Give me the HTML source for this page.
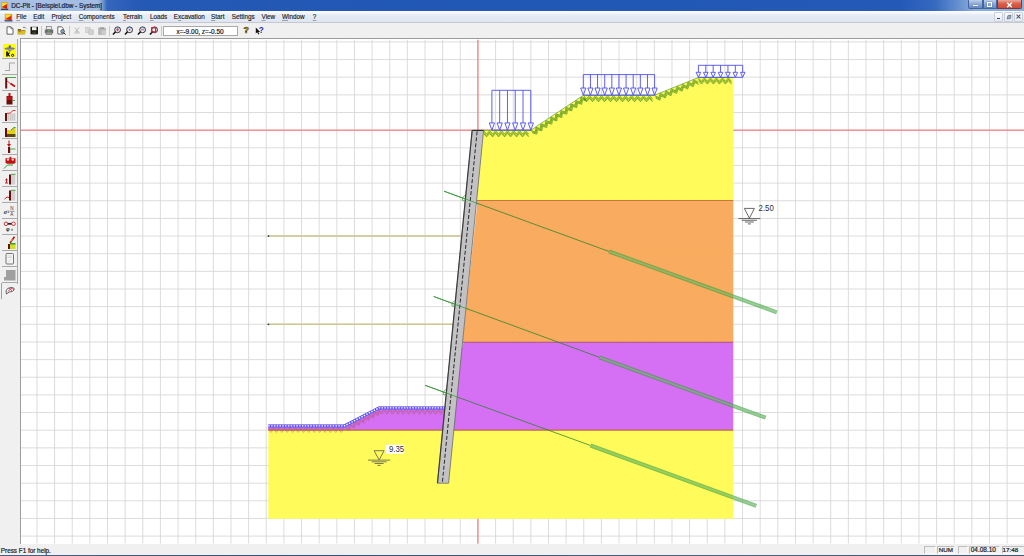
<!DOCTYPE html>
<html><head><meta charset="utf-8"><style>
*{margin:0;padding:0;box-sizing:border-box}
html,body{width:1024px;height:556px;overflow:hidden;background:#f0f0f0;font-family:"Liberation Sans",sans-serif}
.abs{position:absolute}
.t{position:absolute;white-space:nowrap;line-height:1;font-family:"Liberation Sans",sans-serif}
u{text-decoration:underline;text-underline-offset:0.8px;text-decoration-thickness:0.4px;text-decoration-color:#9aa0aa}
#title{left:0;top:0;width:1024px;height:11.3px;background:linear-gradient(90deg,#a9c1e4 0,#a2bce2 98px,#7d9fd6 102px,#3566bd 107px,#2459b6 140px,#2157b5 600px,#2459b8 900px,#3669c0 935px,#6f96d2 962px,#8aaedc 975px)}
#menu{left:0;top:11.3px;width:1024px;height:10.9px;background:linear-gradient(#fbfcfe 0,#f4f7fb 20%,#e6ecf5 35%,#dfe6f1 100%)}
#tool{left:0;top:22.8px;width:1024px;height:16px;background:#f0f0f0}
svg{position:absolute;left:0;top:0}
</style></head><body>
<div class="abs" id="title"></div>
<svg class="abs" style="left:0;top:1px" width="10" height="10" viewBox="0 0 10 10"><rect x="1" y="1.2" width="7.2" height="7.6" fill="#e8a020"/><rect x="2" y="2" width="5" height="3" fill="#f0e020"/><path d="M2 6 L7 3 L7 8 Z" fill="#d02010"/><rect x="1" y="7.8" width="7.2" height="1.2" fill="#1f3f8f"/></svg>
<div class="t" style="left:11.2px;top:3.21px;font-size:6.4px;color:#1c2030;-webkit-text-stroke:0.2px #1c2030;">DC-Pit - [Beispiel.dbw - System]</div>
<div class="abs" style="left:967.5px;top:0;width:15px;height:9.4px;background:linear-gradient(#bccfea,#94b0dc 40%,#6489c6);border:0.6px solid #44649a;border-top:none;border-radius:0 0 0 2px"></div>
<div class="abs" style="left:972.8px;top:5px;width:5.3px;height:1.4px;background:#fff;box-shadow:0 0 1px #345"></div>
<div class="abs" style="left:982.7px;top:0;width:14px;height:9.4px;background:linear-gradient(#bccfea,#94b0dc 40%,#6489c6);border:0.6px solid #44649a;border-top:none"></div>
<div class="abs" style="left:986.8px;top:2.2px;width:5px;height:4.6px;border:1.2px solid #fff;box-shadow:0 0 1px #345"></div>
<div class="abs" style="left:996.9px;top:0;width:25.6px;height:9.4px;background:linear-gradient(#eaa89a,#d8604c 45%,#cc4a36);border:0.6px solid #7a3a3a;border-top:none;border-radius:0 0 2px 0"></div>
<svg class="abs" style="left:1006px;top:1.6px" width="7" height="6" viewBox="0 0 7 6"><path d="M1.2 0.8L5.8 5.2M5.8 0.8L1.2 5.2" stroke="#fff" stroke-width="1.5"/></svg>
<div class="abs" id="menu"></div>
<svg class="abs" style="left:3.5px;top:12.5px" width="9" height="9" viewBox="0 0 9 9"><rect x="0.8" y="0.8" width="7.4" height="7.4" fill="#e89a20"/><rect x="1.6" y="1.6" width="5" height="3" fill="#f2e030"/><path d="M1.6 6 L7.4 2.5 L7.4 7.4Z" fill="#d8261a"/><rect x="0.6" y="7.2" width="7.8" height="1.2" fill="#2a4a9a"/></svg>
<div class="t" style="left:16.2px;top:14.35px;font-size:6.35px;color:#1e1e1e;-webkit-text-stroke:0.15px #1e1e1e;"><u>F</u>ile</div>
<div class="t" style="left:33.3px;top:14.35px;font-size:6.35px;color:#1e1e1e;-webkit-text-stroke:0.15px #1e1e1e;"><u>E</u>dit</div>
<div class="t" style="left:51.5px;top:14.35px;font-size:6.35px;color:#1e1e1e;-webkit-text-stroke:0.15px #1e1e1e;"><u>P</u>roject</div>
<div class="t" style="left:78.7px;top:14.35px;font-size:6.35px;color:#1e1e1e;-webkit-text-stroke:0.15px #1e1e1e;"><u>C</u>omponents</div>
<div class="t" style="left:123.0px;top:14.35px;font-size:6.35px;color:#1e1e1e;-webkit-text-stroke:0.15px #1e1e1e;"><u>T</u>errain</div>
<div class="t" style="left:150.0px;top:14.35px;font-size:6.35px;color:#1e1e1e;-webkit-text-stroke:0.15px #1e1e1e;"><u>L</u>oads</div>
<div class="t" style="left:173.8px;top:14.35px;font-size:6.35px;color:#1e1e1e;-webkit-text-stroke:0.15px #1e1e1e;">E<u>x</u>cavation</div>
<div class="t" style="left:211.0px;top:14.35px;font-size:6.35px;color:#1e1e1e;-webkit-text-stroke:0.15px #1e1e1e;"><u>S</u>tart</div>
<div class="t" style="left:231.8px;top:14.35px;font-size:6.35px;color:#1e1e1e;-webkit-text-stroke:0.15px #1e1e1e;">Settin<u>g</u>s</div>
<div class="t" style="left:261.5px;top:14.35px;font-size:6.35px;color:#1e1e1e;-webkit-text-stroke:0.15px #1e1e1e;"><u>V</u>iew</div>
<div class="t" style="left:282.0px;top:14.35px;font-size:6.35px;color:#1e1e1e;-webkit-text-stroke:0.15px #1e1e1e;"><u>W</u>indow</div>
<div class="t" style="left:312.8px;top:14.35px;font-size:6.35px;color:#1e1e1e;-webkit-text-stroke:0.15px #1e1e1e;"><u>?</u></div>
<div class="abs" style="left:993.75px;top:12.2px;width:9.4px;height:9.7px;background:linear-gradient(#fbfcfe,#e4e9f2);border:0.6px solid #c9d0dc;border-radius:1px"></div>
<div class="abs" style="left:1003.75px;top:12.2px;width:9.4px;height:9.7px;background:linear-gradient(#fbfcfe,#e4e9f2);border:0.6px solid #c9d0dc;border-radius:1px"></div>
<div class="abs" style="left:1013.75px;top:12.2px;width:9.4px;height:9.7px;background:linear-gradient(#fbfcfe,#e4e9f2);border:0.6px solid #c9d0dc;border-radius:1px"></div>
<div class="abs" style="left:996.5px;top:18px;width:3.6px;height:1.1px;background:#445"></div>
<svg class="abs" style="left:1005.5px;top:14px" width="6" height="6" viewBox="0 0 6 6"><path d="M1 5 L2 1.5 L5 1 L4.5 4.5Z" fill="#9ab" stroke="#667" stroke-width="0.7"/></svg>
<svg class="abs" style="left:1016px;top:14.3px" width="5" height="5" viewBox="0 0 5 5"><path d="M0.6 0.6L4.4 4.4M4.4 0.6L0.6 4.4" stroke="#556" stroke-width="1.1"/></svg>
<div class="abs" style="left:0;top:22px;width:1024px;height:0.9px;background:#c4c8d0"></div>
<div class="abs" id="tool"></div>
<svg class="abs" style="left:5.5px;top:26px" width="8" height="9" viewBox="0 0 8 9"><path d="M1 0.8H5L7 2.8V8.2H1Z" fill="#fff" stroke="#555" stroke-width="0.9"/><path d="M5 0.8V2.8H7" fill="none" stroke="#555" stroke-width="0.7"/></svg>
<svg class="abs" style="left:17px;top:26px" width="10" height="9" viewBox="0 0 10 9"><path d="M0.8 3H3.5L4.3 4H8V8.3H0.8Z" fill="#6b5a10"/><path d="M1.5 4.5H9.3L8 8.3H0.8Z" fill="#d8c020"/><path d="M2 5L4 6" stroke="#e03010" stroke-width="0.8"/><path d="M6 1.5Q8 0.5 9 2.5" stroke="#444" stroke-width="0.7" fill="none"/></svg>
<svg class="abs" style="left:29.5px;top:26px" width="8.5" height="9" viewBox="0 0 8.5 9"><rect x="0.5" y="0.8" width="7.5" height="7.5" fill="#1a1a0a"/><rect x="2" y="1.2" width="4.5" height="3" fill="#f4f4f4"/><rect x="2.2" y="5.6" width="4" height="2.7" fill="#3a3a2a"/></svg>
<div class="abs" style="left:41px;top:26px;width:0.8px;height:9.5px;background:#c8c8c8"></div>
<svg class="abs" style="left:44px;top:26px" width="10" height="9" viewBox="0 0 10 9"><rect x="2.5" y="0.6" width="5" height="3" fill="#e8e8e8" stroke="#666" stroke-width="0.6"/><path d="M0.8 3.5H9.2V7.2H0.8Z" fill="#707070"/><rect x="2" y="6" width="6" height="2.5" fill="#9a9a9a" stroke="#555" stroke-width="0.5"/><circle cx="5" cy="5" r="0.8" fill="#5c5"/></svg>
<svg class="abs" style="left:56.8px;top:26.2px" width="9.5" height="9" viewBox="0 0 9.5 9"><path d="M0.8 0.8H4.6L6.2 2.4V8H0.8Z" fill="#fff" stroke="#444" stroke-width="0.8"/><circle cx="5.6" cy="5.4" r="1.8" fill="#8ac" stroke="#333" stroke-width="0.7"/><path d="M6.8 6.8L8.6 8.6" stroke="#222" stroke-width="1"/></svg>
<div class="abs" style="left:68.6px;top:26px;width:0.8px;height:9.5px;background:#c8c8c8"></div>
<svg class="abs" style="left:73.8px;top:27px" width="6" height="7" viewBox="0 0 6 7"><path d="M1 0.5L4 5M5 0.5L2 5" stroke="#b8b8b8" stroke-width="0.9"/><circle cx="1.6" cy="5.6" r="0.9" fill="none" stroke="#b0b0b0" stroke-width="0.7"/><circle cx="4.4" cy="5.6" r="0.9" fill="none" stroke="#b0b0b0" stroke-width="0.7"/></svg>
<svg class="abs" style="left:84.8px;top:26.8px" width="9.5" height="8" viewBox="0 0 9.5 8"><rect x="0.6" y="0.6" width="4.5" height="5" fill="#d8d8d8" stroke="#bbb" stroke-width="0.5"/><rect x="3.8" y="2.8" width="4.8" height="4.8" fill="#d0d0d0" stroke="#bbb" stroke-width="0.5"/></svg>
<svg class="abs" style="left:97.5px;top:26.8px" width="8.5" height="8" viewBox="0 0 8.5 8"><rect x="0.6" y="1" width="7" height="6.6" fill="#b8b8b8" stroke="#a8a8a8" stroke-width="0.5"/><rect x="2" y="0.4" width="4" height="1.5" fill="#999"/><rect x="3.5" y="3.5" width="4.5" height="4" fill="#ccc"/></svg>
<div class="abs" style="left:108.7px;top:26px;width:0.8px;height:9.5px;background:#c8c8c8"></div>
<svg class="abs" style="left:112.2px;top:26.2px" width="9" height="9" viewBox="0 0 9 9"><circle cx="5.6" cy="3.8" r="2.9" fill="#eef4fb" stroke="#1a1a2a" stroke-width="0.9"/><path d="M3.6 5.8L0.9 8.5" stroke="#111" stroke-width="1.5"/><path d="M4 2Q5.6 1.2 7.2 2.2" stroke="#3a80d0" stroke-width="0.7" fill="none"/><path d="M5.6 2.2V5.4M4 3.8H7.2" stroke="#e03030" stroke-width="0.9"/></svg>
<svg class="abs" style="left:124.4px;top:26.2px" width="9" height="9" viewBox="0 0 9 9"><circle cx="5.6" cy="3.8" r="2.9" fill="#eef4fb" stroke="#1a1a2a" stroke-width="0.9"/><path d="M3.6 5.8L0.9 8.5" stroke="#111" stroke-width="1.5"/><path d="M4 2Q5.6 1.2 7.2 2.2" stroke="#3a80d0" stroke-width="0.7" fill="none"/><circle cx="5.6" cy="3.8" r="0.9" fill="#e03030"/></svg>
<svg class="abs" style="left:136.6px;top:26.2px" width="9" height="9" viewBox="0 0 9 9"><circle cx="5.6" cy="3.8" r="2.9" fill="#eef4fb" stroke="#1a1a2a" stroke-width="0.9"/><path d="M3.6 5.8L0.9 8.5" stroke="#111" stroke-width="1.5"/><path d="M4 2Q5.6 1.2 7.2 2.2" stroke="#3a80d0" stroke-width="0.7" fill="none"/><path d="M4 3.8H7.2" stroke="#e03030" stroke-width="0.9"/></svg>
<svg class="abs" style="left:148.8px;top:26.2px" width="9" height="9" viewBox="0 0 9 9"><circle cx="5.6" cy="3.8" r="2.9" fill="#eef4fb" stroke="#1a1a2a" stroke-width="0.9"/><path d="M3.6 5.8L0.9 8.5" stroke="#111" stroke-width="1.5"/><path d="M4 2Q5.6 1.2 7.2 2.2" stroke="#3a80d0" stroke-width="0.7" fill="none"/><rect x="2.6" y="1.8" width="4" height="4" fill="none" stroke="#e02020" stroke-width="1.2"/></svg>
<div class="abs" style="left:161.4px;top:26px;width:0.8px;height:9.5px;background:#c8c8c8"></div>
<div class="abs" style="left:163.2px;top:26.2px;width:74.7px;height:10.1px;background:#fff;border:0.8px solid #a9a9a9"></div>
<div class="t" style="left:176.4px;top:28.92px;font-size:6.5px;color:#1a1a1a;-webkit-text-stroke:0.2px #1a1a1a;">x=-9.00, z=-0.50</div>
<div class="t" style="left:243.6px;top:26.06px;font-size:9px;color:#e0c000;-webkit-text-stroke:0.5px #403000;"><b>?</b></div>
<svg class="abs" style="left:254.8px;top:26.6px" width="9.5" height="8" viewBox="0 0 9.5 8"><path d="M0.8 0.6V6.6L2.2 5.3L3.4 7.6L4.4 7.1L3.3 4.9H5.1Z" fill="#111"/></svg>
<div class="t" style="left:258.8px;top:26.58px;font-size:8.2px;color:#2030b0;"><b>?</b></div>
<div class="abs" style="left:19.7px;top:38.3px;width:1004.3px;height:505.49999999999994px;background:#fff;border-left:1.3px solid #9c9c9c;border-top:1.3px solid #9c9c9c"></div>
<div class="abs" style="left:16.6px;top:38.5px;width:1.3px;height:245px;background:#a8a8a8"></div>
<div class="abs" style="left:1.2px;top:283px;width:1.2px;height:16px;background:#a0a0a0"></div>
<div class="abs" style="left:1.8px;top:58.0px;width:15.5px;height:1.1px;background:#a9a9a9"></div>
<div class="abs" style="left:1.8px;top:74.0px;width:15.5px;height:1.1px;background:#a9a9a9"></div>
<div class="abs" style="left:1.8px;top:90.0px;width:15.5px;height:1.1px;background:#a9a9a9"></div>
<div class="abs" style="left:1.8px;top:106.0px;width:15.5px;height:1.1px;background:#a9a9a9"></div>
<div class="abs" style="left:1.8px;top:122.0px;width:15.5px;height:1.1px;background:#a9a9a9"></div>
<div class="abs" style="left:1.8px;top:138.0px;width:15.5px;height:1.1px;background:#a9a9a9"></div>
<div class="abs" style="left:1.8px;top:154.0px;width:15.5px;height:1.1px;background:#a9a9a9"></div>
<div class="abs" style="left:1.8px;top:170.0px;width:15.5px;height:1.1px;background:#a9a9a9"></div>
<div class="abs" style="left:1.8px;top:186.0px;width:15.5px;height:1.1px;background:#a9a9a9"></div>
<div class="abs" style="left:1.8px;top:202.0px;width:15.5px;height:1.1px;background:#a9a9a9"></div>
<div class="abs" style="left:1.8px;top:218.0px;width:15.5px;height:1.1px;background:#a9a9a9"></div>
<div class="abs" style="left:1.8px;top:234.0px;width:15.5px;height:1.1px;background:#a9a9a9"></div>
<div class="abs" style="left:1.8px;top:250.0px;width:15.5px;height:1.1px;background:#a9a9a9"></div>
<div class="abs" style="left:1.8px;top:266.0px;width:15.5px;height:1.1px;background:#a9a9a9"></div>
<div class="abs" style="left:1.8px;top:282.0px;width:15.5px;height:1.1px;background:#a9a9a9"></div>
<svg class="abs" style="left:2.8px;top:43.6px" width="13.5" height="14" viewBox="0 0 13.5 14"><rect x="0" y="0" width="13.5" height="13.2" fill="#ffff00"/><path d="M1.2 4.2Q6.7 2.4 12.3 4.2L10.5 5.8Q6.7 5.2 2.9 5.8Z" fill="#7c7c98"/><path d="M4.2 5.4L9.2 5.4L6.7 8.2Z" fill="#8a8aa8"/><rect x="5.8" y="1.6" width="1.9" height="2" fill="#2030e0"/><path d="M4 7.6V12.4" stroke="#000" stroke-width="1.6"/><path d="M4.6 10.2L6.6 8.6M4.8 10L6.6 12.4" stroke="#000" stroke-width="1.2"/><circle cx="9.6" cy="11.3" r="1.1" fill="none" stroke="#301010" stroke-width="1"/></svg>
<svg class="abs" style="left:2.8px;top:59.6px" width="13.5" height="14" viewBox="0 0 13.5 14"><path d="M2 10.5H6.5V3H12" stroke="#a8a8a8" stroke-width="1.1" fill="none"/></svg>
<svg class="abs" style="left:2.8px;top:75.6px" width="13.5" height="14" viewBox="0 0 13.5 14"><rect x="2.2" y="1.5" width="2" height="11" fill="#6a0c0c"/><path d="M3 1.5H13" stroke="#30a030" stroke-width="0.9"/><path d="M4 5L8 8" stroke="#c01010" stroke-width="0.7"/><path d="M7.5 7.5L12 10.5" stroke="#c01010" stroke-width="1.8"/></svg>
<svg class="abs" style="left:2.8px;top:91.6px" width="13.5" height="14" viewBox="0 0 13.5 14"><rect x="5.5" y="1" width="2" height="3" fill="#c01010"/><path d="M3.5 4H9.5V12.5H3.5Z" fill="#6a0c0c"/><path d="M4 4.5H9V8H4Z" fill="#c01010"/><path d="M9.5 8.5H12" stroke="#30a030" stroke-width="0.9"/></svg>
<svg class="abs" style="left:2.8px;top:107.6px" width="13.5" height="14" viewBox="0 0 13.5 14"><rect x="2" y="5" width="2" height="8" fill="#6a0c0c"/><rect x="4" y="5" width="8.5" height="8" fill="#d8d8d8"/><path d="M5 7H12M5 9H12M5 11H12" stroke="#aaa" stroke-width="0.6" stroke-dasharray="1 1"/><path d="M4 5.2H7L10 2.5H12.5" stroke="#e02020" stroke-width="0.9" fill="none"/></svg>
<svg class="abs" style="left:2.8px;top:123.6px" width="13.5" height="14" viewBox="0 0 13.5 14"><rect x="2" y="4" width="2" height="9" fill="#6a0c0c"/><path d="M4 6H8L11 3.5H12.5V10H4Z" fill="#e0d020"/><path d="M8 6L11 3.5H12.5" stroke="#30a030" stroke-width="1" fill="none"/><rect x="4" y="10" width="8.5" height="3" fill="#5a4a10"/></svg>
<svg class="abs" style="left:2.8px;top:139.6px" width="13.5" height="14" viewBox="0 0 13.5 14"><path d="M6 0.5V5" stroke="#c01010" stroke-width="1"/><path d="M4 4H8L6 7Z" fill="#c01010"/><rect x="5" y="7" width="2.2" height="6" fill="#6a0c0c"/><path d="M7.2 9H12.5" stroke="#30a030" stroke-width="0.9"/></svg>
<svg class="abs" style="left:2.8px;top:155.6px" width="13.5" height="14" viewBox="0 0 13.5 14"><path d="M2.5 2.2H12.5V6.8L11 7.8H4L2.5 6.8Z" fill="#c01010"/><circle cx="5" cy="3.6" r="1.2" fill="#ffd0d0"/><circle cx="9.8" cy="3.6" r="1.2" fill="#ffd0d0"/><rect x="6.5" y="0.8" width="1.8" height="1.6" fill="#c01010"/><path d="M1 12.5L4.5 9H10" stroke="#30a030" stroke-width="1" fill="none"/></svg>
<svg class="abs" style="left:2.8px;top:171.6px" width="13.5" height="14" viewBox="0 0 13.5 14"><path d="M2 11H5M3.5 7V11" stroke="#c01010" stroke-width="0.9"/><path d="M2.5 8.5L3.5 6.5L4.5 8.5" stroke="#c01010" stroke-width="0.7" fill="none"/><rect x="6" y="2.5" width="2.2" height="10" fill="#6a0c0c"/><rect x="8.2" y="2.5" width="4" height="10" fill="#d0d0d0"/><path d="M8.2 2.3H12.5" stroke="#30a030" stroke-width="0.9"/></svg>
<svg class="abs" style="left:2.8px;top:187.6px" width="13.5" height="14" viewBox="0 0 13.5 14"><path d="M1.5 11L4 9L6 9.5" stroke="#c01010" stroke-width="0.9" fill="none"/><rect x="6" y="2.5" width="2.2" height="10" fill="#6a0c0c"/><rect x="8.2" y="2.5" width="4" height="10" fill="#d0d0d0"/><path d="M8.2 2.3H12.5" stroke="#30a030" stroke-width="0.9"/></svg>
<svg class="abs" style="left:2.8px;top:203.6px" width="13.5" height="14" viewBox="0 0 13.5 14"><text x="0.8" y="9.6" font-family="Liberation Serif" font-style="italic" font-weight="bold" font-size="6" fill="#222">σ</text><path d="M4.6 7.2H6.4M4.6 8.4H6.4" stroke="#333" stroke-width="0.6"/><text x="7.3" y="6.2" font-family="Liberation Sans" font-size="4.5" fill="#333">N</text><path d="M7 7.3H11.5" stroke="#333" stroke-width="0.5"/><text x="7.3" y="11.8" font-family="Liberation Sans" font-size="4.5" fill="#333">A</text></svg>
<svg class="abs" style="left:2.8px;top:219.6px" width="13.5" height="14" viewBox="0 0 13.5 14"><path d="M3.5 3.8H10" stroke="#222" stroke-width="1.8"/><circle cx="3" cy="3.8" r="1.8" fill="#fff" stroke="#d02020" stroke-width="0.9"/><circle cx="10.5" cy="3.8" r="1.8" fill="#fff" stroke="#d02020" stroke-width="0.9"/><text x="3" y="11" font-family="Liberation Sans" font-weight="bold" font-size="5" fill="#222">φ</text><path d="M8 9.3H10M8 10.2H10" stroke="#333" stroke-width="0.5"/></svg>
<svg class="abs" style="left:2.8px;top:235.6px" width="13.5" height="14" viewBox="0 0 13.5 14"><path d="M11.5 0.8L7 7" stroke="#c01010" stroke-width="1.6"/><path d="M9.5 3.5L8 5.5" stroke="#f0e020" stroke-width="0.9"/><rect x="5" y="8" width="2" height="5" fill="#6a0c0c"/><rect x="7" y="8" width="5.5" height="5" fill="#d0e020"/><rect x="7" y="7" width="5.5" height="1.5" fill="#30a030"/></svg>
<svg class="abs" style="left:2.8px;top:251.6px" width="13.5" height="14" viewBox="0 0 13.5 14"><rect x="3" y="1.5" width="7.5" height="10.5" rx="1" fill="#f4f4f4" stroke="#555" stroke-width="0.8"/><path d="M4.5 4H9M4.5 5.5H9" stroke="#bbb" stroke-width="0.5"/><path d="M5 10L8.5 7" stroke="#ccc" stroke-width="0.6"/></svg>
<svg class="abs" style="left:2.8px;top:267.6px" width="13.5" height="14" viewBox="0 0 13.5 14"><path d="M3 2H12.5V12.5H1V9H3Z" fill="#a0a0a0"/></svg>
<svg class="abs" style="left:2.8px;top:283.6px" width="13.5" height="14" viewBox="0 0 13.5 14"><path d="M3 7Q4 3.5 8 3.5Q12 3.5 11 6Q10 8 6 8L3.5 10Z" fill="#fff" stroke="#222" stroke-width="0.7"/><path d="M5 7.5Q8 3 11 5.5" stroke="#e03040" stroke-width="1" fill="none"/><path d="M6 4L9 7" stroke="#e03040" stroke-width="0.8"/></svg>
<svg width="1024" height="556" viewBox="0 0 1024 556">
<defs><clipPath id="cv"><rect x="21.0" y="39.6" width="1003.0" height="504.19999999999993"/></clipPath></defs>
<g clip-path="url(#cv)">
<path d="M36.94 39.6V543.8M54.58 39.6V543.8M72.22 39.6V543.8M89.86 39.6V543.8M107.50 39.6V543.8M125.14 39.6V543.8M142.78 39.6V543.8M160.42 39.6V543.8M178.06 39.6V543.8M195.70 39.6V543.8M213.34 39.6V543.8M230.98 39.6V543.8M248.62 39.6V543.8M266.26 39.6V543.8M283.90 39.6V543.8M301.54 39.6V543.8M319.18 39.6V543.8M336.82 39.6V543.8M354.46 39.6V543.8M372.10 39.6V543.8M389.74 39.6V543.8M407.38 39.6V543.8M425.02 39.6V543.8M442.66 39.6V543.8M460.30 39.6V543.8M477.94 39.6V543.8M495.58 39.6V543.8M513.22 39.6V543.8M530.86 39.6V543.8M548.50 39.6V543.8M566.14 39.6V543.8M583.78 39.6V543.8M601.42 39.6V543.8M619.06 39.6V543.8M636.70 39.6V543.8M654.34 39.6V543.8M671.98 39.6V543.8M689.62 39.6V543.8M707.26 39.6V543.8M724.90 39.6V543.8M742.54 39.6V543.8M760.18 39.6V543.8M777.82 39.6V543.8M795.46 39.6V543.8M813.10 39.6V543.8M830.74 39.6V543.8M848.38 39.6V543.8M866.02 39.6V543.8M883.66 39.6V543.8M901.30 39.6V543.8M918.94 39.6V543.8M936.58 39.6V543.8M954.22 39.6V543.8M971.86 39.6V543.8M989.50 39.6V543.8M1007.14 39.6V543.8M21.0 41.90H1024M21.0 59.55H1024M21.0 77.20H1024M21.0 94.85H1024M21.0 112.50H1024M21.0 130.15H1024M21.0 147.80H1024M21.0 165.45H1024M21.0 183.10H1024M21.0 200.75H1024M21.0 218.40H1024M21.0 236.05H1024M21.0 253.70H1024M21.0 271.35H1024M21.0 289.00H1024M21.0 306.65H1024M21.0 324.30H1024M21.0 341.95H1024M21.0 359.60H1024M21.0 377.25H1024M21.0 394.90H1024M21.0 412.55H1024M21.0 430.20H1024M21.0 447.85H1024M21.0 465.50H1024M21.0 483.15H1024M21.0 500.80H1024M21.0 518.45H1024M21.0 536.10H1024" stroke="#d6d6d6" stroke-width="0.85" fill="none"/>
<path d="M477.94 39.6V543.8M21.0 130.15H1024" stroke="#ef6262" stroke-width="0.95" fill="none"/>
<polygon points="483.6,130.3 530.7,130.3 583.5,95.2 654.6,95.2 698.4,77.5 733.3,77.5 733.3,200.5 476.65,200.5" fill="#fffb5a"/>
<polygon points="477.65,200.5 733.3,200.5 733.3,342.3 462.58,342.3" fill="#f9ab5f"/>
<polygon points="463.58,342.3 733.3,342.3 733.3,430.1 268.3,430.1 268.3,424.6 344.4,424.6 378.9,406.6 446.13,406.6" fill="#d56ff4"/>
<polygon points="268.3,430.1 733.3,430.1 733.3,518.8 268.3,518.8" fill="#fffb5a"/>
<path d="M476.65 200.5H733.3" stroke="#c8783a" stroke-width="1.1"/>
<path d="M462.58 342.3H733.3" stroke="#a8507a" stroke-width="1.1"/>
<path d="M268.3 430.1H733.3" stroke="#b86a48" stroke-width="1.1"/>
<path d="M483.60,130.70 L486.60,134.10 L489.60,130.70 L492.60,134.10 L495.60,130.70 L498.60,134.10 L501.60,130.70 L504.60,134.10 L507.60,130.70 L510.60,134.10 L513.60,130.70 L516.60,134.10 L519.60,130.70 L522.60,134.10 L525.60,130.70 L528.60,134.10 M483.60,132.10 L486.60,135.50 L489.60,132.10 L492.60,135.50 L495.60,132.10 L498.60,135.50 L501.60,132.10 L504.60,135.50 L507.60,132.10 L510.60,135.50 L513.60,132.10 L516.60,135.50 L519.60,132.10 L522.60,135.50 L525.60,132.10 L528.60,135.50 M483.60,133.50 L486.60,136.90 L489.60,133.50 L492.60,136.90 L495.60,133.50 L498.60,136.90 L501.60,133.50 L504.60,136.90 L507.60,133.50 L510.60,136.90 L513.60,133.50 L516.60,136.90 L519.60,133.50 L522.60,136.90 L525.60,133.50 L528.60,136.90 M530.92,130.63 L535.30,131.80 L535.92,127.31 L540.30,128.48 L540.91,123.99 L545.30,125.16 L545.91,120.67 L550.29,121.84 L550.91,117.35 L555.29,118.52 L555.90,114.02 L560.29,115.20 L560.90,110.70 L565.28,111.87 L565.90,107.38 L570.28,108.55 L570.89,104.06 L575.28,105.23 L575.89,100.74 L580.27,101.91 L580.89,97.42 L585.27,98.59 M531.70,131.80 L536.08,132.97 L536.69,128.48 L541.07,129.65 L541.69,125.16 L546.07,126.33 L546.69,121.83 L551.07,123.00 L551.68,118.51 L556.06,119.68 L556.68,115.19 L561.06,116.36 L561.68,111.87 L566.06,113.04 L566.67,108.55 L571.05,109.72 L571.67,105.23 L576.05,106.40 L576.67,101.90 L581.05,103.07 L581.66,98.58 L586.04,99.75 M532.47,132.96 L536.85,134.14 L537.47,129.64 L541.85,130.81 L542.46,126.32 L546.85,127.49 L547.46,123.00 L551.84,124.17 L552.46,119.68 L556.84,120.85 L557.45,116.36 L561.84,117.53 L562.45,113.04 L566.83,114.21 L567.45,109.71 L571.83,110.88 L572.44,106.39 L576.83,107.56 L577.44,103.07 L581.82,104.24 L582.44,99.75 L586.82,100.92 M583.50,95.60 L586.50,99.00 L589.50,95.60 L592.50,99.00 L595.50,95.60 L598.50,99.00 L601.50,95.60 L604.50,99.00 L607.50,95.60 L610.50,99.00 L613.50,95.60 L616.50,99.00 L619.50,95.60 L622.50,99.00 L625.50,95.60 L628.50,99.00 L631.50,95.60 L634.50,99.00 L637.50,95.60 L640.50,99.00 L643.50,95.60 L646.50,99.00 L649.50,95.60 L652.50,99.00 M583.50,97.00 L586.50,100.40 L589.50,97.00 L592.50,100.40 L595.50,97.00 L598.50,100.40 L601.50,97.00 L604.50,100.40 L607.50,97.00 L610.50,100.40 L613.50,97.00 L616.50,100.40 L619.50,97.00 L622.50,100.40 L625.50,97.00 L628.50,100.40 L631.50,97.00 L634.50,100.40 L637.50,97.00 L640.50,100.40 L643.50,97.00 L646.50,100.40 L649.50,97.00 L652.50,100.40 M583.50,98.40 L586.50,101.80 L589.50,98.40 L592.50,101.80 L595.50,98.40 L598.50,101.80 L601.50,98.40 L604.50,101.80 L607.50,98.40 L610.50,101.80 L613.50,98.40 L616.50,101.80 L619.50,98.40 L622.50,101.80 L625.50,98.40 L628.50,101.80 L631.50,98.40 L634.50,101.80 L637.50,98.40 L640.50,101.80 L643.50,98.40 L646.50,101.80 L649.50,98.40 L652.50,101.80 M654.75,95.57 L658.81,97.60 L660.31,93.32 L664.37,95.35 L665.88,91.07 L669.93,93.10 L671.44,88.83 L675.49,90.86 L677.00,86.58 L681.06,88.61 L682.56,84.33 L686.62,86.36 L688.13,82.08 L692.18,84.11 L693.69,79.83 L697.75,81.86 M655.27,96.87 L659.33,98.90 L660.84,94.62 L664.89,96.65 L666.40,92.37 L670.46,94.40 L671.96,90.12 L676.02,92.15 L677.53,87.88 L681.58,89.91 L683.09,85.63 L687.14,87.66 L688.65,83.38 L692.71,85.41 L694.22,81.13 L698.27,83.16 M655.80,98.17 L659.85,100.20 L661.36,95.92 L665.42,97.95 L666.92,93.67 L670.98,95.70 L672.49,91.42 L676.54,93.45 L678.05,89.17 L682.11,91.20 L683.61,86.93 L687.67,88.96 L689.18,84.68 L693.23,86.71 L694.74,82.43 L698.79,84.46 M698.40,77.90 L701.40,81.30 L704.40,77.90 L707.40,81.30 L710.40,77.90 L713.40,81.30 L716.40,77.90 L719.40,81.30 L722.40,77.90 L725.40,81.30 L728.40,77.90 L731.40,81.30 M698.40,79.30 L701.40,82.70 L704.40,79.30 L707.40,82.70 L710.40,79.30 L713.40,82.70 L716.40,79.30 L719.40,82.70 L722.40,79.30 L725.40,82.70 L728.40,79.30 L731.40,82.70 M698.40,80.70 L701.40,84.10 L704.40,80.70 L707.40,84.10 L710.40,80.70 L713.40,84.10 L716.40,80.70 L719.40,84.10 L722.40,80.70 L725.40,84.10 L728.40,80.70 L731.40,84.10" stroke="#2e7a10" stroke-width="0.6" fill="none"/>
<path d="M483.6,130.3 L530.7,130.3 L583.5,95.2 L654.6,95.2 L698.4,77.5 L733.3,77.5" stroke="#3a8a20" stroke-width="0.6" fill="none"/>
<path d="M268.30,426.70 L271.00,429.90 L273.70,426.70 L276.40,429.90 L279.10,426.70 L281.80,429.90 L284.50,426.70 L287.20,429.90 L289.90,426.70 L292.60,429.90 L295.30,426.70 L298.00,429.90 L300.70,426.70 L303.40,429.90 L306.10,426.70 L308.80,429.90 L311.50,426.70 L314.20,429.90 L316.90,426.70 L319.60,429.90 L322.30,426.70 L325.00,429.90 L327.70,426.70 L330.40,429.90 L333.10,426.70 L335.80,429.90 L338.50,426.70 L341.20,429.90 L343.90,426.70 M268.30,428.00 L271.00,431.20 L273.70,428.00 L276.40,431.20 L279.10,428.00 L281.80,431.20 L284.50,428.00 L287.20,431.20 L289.90,428.00 L292.60,431.20 L295.30,428.00 L298.00,431.20 L300.70,428.00 L303.40,431.20 L306.10,428.00 L308.80,431.20 L311.50,428.00 L314.20,431.20 L316.90,428.00 L319.60,431.20 L322.30,428.00 L325.00,431.20 L327.70,428.00 L330.40,431.20 L333.10,428.00 L335.80,431.20 L338.50,428.00 L341.20,431.20 L343.90,428.00 M268.30,429.30 L271.00,432.50 L273.70,429.30 L276.40,432.50 L279.10,429.30 L281.80,432.50 L284.50,429.30 L287.20,432.50 L289.90,429.30 L292.60,432.50 L295.30,429.30 L298.00,432.50 L300.70,429.30 L303.40,432.50 L306.10,429.30 L308.80,432.50 L311.50,429.30 L314.20,432.50 L316.90,429.30 L319.60,432.50 L322.30,429.30 L325.00,432.50 L327.70,429.30 L330.40,432.50 L333.10,429.30 L335.80,432.50 L338.50,429.30 L341.20,432.50 L343.90,429.30 M344.68,426.63 L348.55,428.22 L349.47,424.13 L353.34,425.72 L354.25,421.64 L358.13,423.22 L359.04,419.14 L362.91,420.73 L363.83,416.64 L367.70,418.23 L368.62,414.14 L372.49,415.73 L373.40,411.64 L377.28,413.23 L378.19,409.15 M345.28,427.78 L349.15,429.37 L350.07,425.29 L353.94,426.87 L354.85,422.79 L358.73,424.38 L359.64,420.29 L363.52,421.88 L364.43,417.79 L368.30,419.38 L369.22,415.30 L373.09,416.88 L374.00,412.80 L377.88,414.39 L378.79,410.30 M345.88,428.94 L349.75,430.53 L350.67,426.44 L354.54,428.03 L355.46,423.94 L359.33,425.53 L360.24,421.44 L364.12,423.03 L365.03,418.95 L368.90,420.53 L369.82,416.45 L373.69,418.04 L374.61,413.95 L378.48,415.54 L379.39,411.45 M378.90,408.70 L381.60,411.90 L384.30,408.70 L387.00,411.90 L389.70,408.70 L392.40,411.90 L395.10,408.70 L397.80,411.90 L400.50,408.70 L403.20,411.90 L405.90,408.70 L408.60,411.90 L411.30,408.70 L414.00,411.90 L416.70,408.70 L419.40,411.90 L422.10,408.70 L424.80,411.90 L427.50,408.70 L430.20,411.90 L432.90,408.70 L435.60,411.90 L438.30,408.70 L441.00,411.90 L443.70,408.70 M378.90,410.00 L381.60,413.20 L384.30,410.00 L387.00,413.20 L389.70,410.00 L392.40,413.20 L395.10,410.00 L397.80,413.20 L400.50,410.00 L403.20,413.20 L405.90,410.00 L408.60,413.20 L411.30,410.00 L414.00,413.20 L416.70,410.00 L419.40,413.20 L422.10,410.00 L424.80,413.20 L427.50,410.00 L430.20,413.20 L432.90,410.00 L435.60,413.20 L438.30,410.00 L441.00,413.20 L443.70,410.00 M378.90,411.30 L381.60,414.50 L384.30,411.30 L387.00,414.50 L389.70,411.30 L392.40,414.50 L395.10,411.30 L397.80,414.50 L400.50,411.30 L403.20,414.50 L405.90,411.30 L408.60,414.50 L411.30,411.30 L414.00,414.50 L416.70,411.30 L419.40,414.50 L422.10,411.30 L424.80,414.50 L427.50,411.30 L430.20,414.50 L432.90,411.30 L435.60,414.50 L438.30,411.30 L441.00,414.50 L443.70,411.30" stroke="#a85a6a" stroke-width="0.45" fill="none" opacity="0.9"/>
<path d="M268.30,425.90 L344.40,425.90 L378.90,407.90 L445.63,407.90" stroke="#5656fa" stroke-width="3.0" fill="none"/>
<path d="M268.30,425.90 L344.40,425.90 L378.90,407.90 L445.63,407.90" stroke="#ffffff" stroke-width="1.4" stroke-dasharray="1.5 1.3" fill="none"/>
<path d="M268.2 236.05H461.91" stroke="#cfc38e" stroke-width="1.5"/>
<circle cx="268.4" cy="236.05" r="0.9" fill="#333"/>
<path d="M268.2 324.3H453.23" stroke="#cfc38e" stroke-width="1.5"/>
<circle cx="268.4" cy="324.3" r="0.9" fill="#333"/>
<path d="M444.0,191.2 L609.1,251.5" stroke="#2a842a" stroke-width="0.9" opacity="0.85"/>
<path d="M609.1,251.5 L776.8,312.3" stroke="#38a038" stroke-width="4" opacity="0.62"/>
<path d="M609.6,251.68 L776.3,312.12" stroke="#ffffff" stroke-width="1.8" opacity="0.18"/>
<path d="M433.7,296.5 L599.4,357.3" stroke="#2a842a" stroke-width="0.9" opacity="0.85"/>
<path d="M599.4,357.3 L765.7,417.7" stroke="#38a038" stroke-width="4" opacity="0.62"/>
<path d="M599.9,357.48 L765.2,417.52" stroke="#ffffff" stroke-width="1.8" opacity="0.18"/>
<path d="M425.1,385.3 L590.5,445.5" stroke="#2a842a" stroke-width="0.9" opacity="0.85"/>
<path d="M590.5,445.5 L756.3,505.9" stroke="#38a038" stroke-width="4" opacity="0.62"/>
<path d="M591.0,445.68 L755.8,505.71999999999997" stroke="#ffffff" stroke-width="1.8" opacity="0.18"/>
<polygon points="472.3,130.4 483.6,130.4 448.6,483.2 437.6,483.2" fill="#c2c2c4" stroke="#5a5a5a" stroke-width="0.7"/>
<path d="M472.1,130.4 L437.40000000000003,483.2" stroke="#3a3a3a" stroke-width="1.1"/>
<path d="M477.1,131.4 L442.40000000000003,482.2" stroke="#2a2a2a" stroke-width="1.0" stroke-dasharray="4 2"/>
<path d="M472.3,130.4 H483.6" stroke="#222" stroke-width="1"/>
<path d="M444.0,191.2 L478.7875694091236,203.91" stroke="#3c9c3c" stroke-width="0.8"/>
<path d="M465.15,195.37 L462.55,197.67 L462.25,200.37 L465.15,201.37" stroke="#3c9c3c" stroke-width="0.8" fill="none"/>
<path d="M433.7,296.5 L468.3396426736441,309.21" stroke="#3c9c3c" stroke-width="0.8"/>
<path d="M454.79,300.68 L452.19,302.98 L451.89,305.68 L454.79,306.68" stroke="#3c9c3c" stroke-width="0.8" fill="none"/>
<path d="M425.1,385.3 L459.54088652835463,397.84" stroke="#3c9c3c" stroke-width="0.8"/>
<path d="M446.06,389.38 L443.46,391.68 L443.16,394.38 L446.06,395.38" stroke="#3c9c3c" stroke-width="0.8" fill="none"/>
<path d="M491.9,90.3H530.8M491.90,90.3V122.9M489.30,122.9H494.50L491.90,130.2ZM499.68,90.3V122.9M497.08,122.9H502.28L499.68,130.2ZM507.46,90.3V122.9M504.86,122.9H510.06L507.46,130.2ZM515.24,90.3V122.9M512.64,122.9H517.84L515.24,130.2ZM523.02,90.3V122.9M520.42,122.9H525.62L523.02,130.2ZM530.80,90.3V122.9M528.20,122.9H533.40L530.80,130.2ZM491.9,130.2H530.8" stroke="#4d4df5" stroke-width="0.9" fill="none"/>
<path d="M583.3,74.6H654.6M583.30,74.6V88.0M580.70,88.0H585.90L583.30,95.2ZM590.43,74.6V88.0M587.83,88.0H593.03L590.43,95.2ZM597.56,74.6V88.0M594.96,88.0H600.16L597.56,95.2ZM604.69,74.6V88.0M602.09,88.0H607.29L604.69,95.2ZM611.82,74.6V88.0M609.22,88.0H614.42L611.82,95.2ZM618.95,74.6V88.0M616.35,88.0H621.55L618.95,95.2ZM626.08,74.6V88.0M623.48,88.0H628.68L626.08,95.2ZM633.21,74.6V88.0M630.61,88.0H635.81L633.21,95.2ZM640.34,74.6V88.0M637.74,88.0H642.94L640.34,95.2ZM647.47,74.6V88.0M644.87,88.0H650.07L647.47,95.2ZM654.60,74.6V88.0M652.00,88.0H657.20L654.60,95.2ZM583.3,95.2H654.6" stroke="#4d4df5" stroke-width="0.9" fill="none"/>
<path d="M698.4,65.3H742.7M698.40,65.3V72.3M696.10,72.3H700.70L698.40,77.3ZM705.78,65.3V72.3M703.48,72.3H708.08L705.78,77.3ZM713.17,65.3V72.3M710.87,72.3H715.47L713.17,77.3ZM720.55,65.3V72.3M718.25,72.3H722.85L720.55,77.3ZM727.93,65.3V72.3M725.63,72.3H730.23L727.93,77.3ZM735.32,65.3V72.3M733.02,72.3H737.62L735.32,77.3ZM742.70,65.3V72.3M740.40,72.3H745.00L742.70,77.3ZM698.4,77.3H742.7" stroke="#4d4df5" stroke-width="0.9" fill="none"/>
<path d="M744.4,208.4H754.4L749.4,218.3Z M738.4,218.60000000000002H760.4 M741.9,220.3H756.9 M744.9,222.0H753.9 M747.9,223.9H750.9" stroke="#444" stroke-width="0.8" fill="none"/><text transform="translate(758.6,211.0) scale(1,1.25)" font-family="Liberation Sans" font-size="7.8" fill="#2c2c38">2.50</text>
<path d="M374.1,450.7H384.1L379.1,459.8Z M368.1,460.1H390.1 M371.6,461.8H386.6 M374.6,463.5H383.6 M377.6,465.40000000000003H380.6" stroke="#5a5a48" stroke-width="0.8" fill="none"/><rect x="386.0" y="444.79999999999995" width="18.2" height="9.0" fill="#fff"/><text transform="translate(389.0,452.4) scale(1,1.25)" font-family="Liberation Sans" font-size="7.8" fill="#2c2c38">9.35</text>
</g>
</svg>
<div class="t" style="left:0.8px;top:547.75px;font-size:6.35px;color:#202020;-webkit-text-stroke:0.2px #202020;">Press F1 for help.</div>
<div class="abs" style="left:924.2px;top:545.6px;width:11.8px;height:8.6px;border-top:0.8px solid #bdbdbd;border-left:0.8px solid #bdbdbd;border-right:0.6px solid #fafafa;border-bottom:0.6px solid #fafafa"></div>
<div class="abs" style="left:937.4px;top:545.6px;width:17.2px;height:8.6px;border-top:0.8px solid #bdbdbd;border-left:0.8px solid #bdbdbd;border-right:0.6px solid #fafafa;border-bottom:0.6px solid #fafafa"></div>
<div class="abs" style="left:957.5px;top:545.6px;width:10.7px;height:8.6px;border-top:0.8px solid #bdbdbd;border-left:0.8px solid #bdbdbd;border-right:0.6px solid #fafafa;border-bottom:0.6px solid #fafafa"></div>
<div class="abs" style="left:969.3px;top:545.6px;width:31.2px;height:8.6px;border-top:0.8px solid #bdbdbd;border-left:0.8px solid #bdbdbd;border-right:0.6px solid #fafafa;border-bottom:0.6px solid #fafafa"></div>
<div class="abs" style="left:1001.5px;top:545.6px;width:23.0px;height:8.6px;border-top:0.8px solid #bdbdbd;border-left:0.8px solid #bdbdbd;border-right:0.6px solid #fafafa;border-bottom:0.6px solid #fafafa"></div>
<div class="t" style="left:938.7px;top:547.04px;font-size:6.25px;color:#202020;-webkit-text-stroke:0.2px #202020;">NUM</div>
<div class="t" style="left:970.7px;top:546.82px;font-size:6.5px;color:#202020;-webkit-text-stroke:0.2px #202020;">04.08.10</div>
<div class="t" style="left:1002.6px;top:547.04px;font-size:6.25px;color:#202020;-webkit-text-stroke:0.2px #202020;">17:48</div>
<div class="abs" style="left:0;top:554.6px;width:1024px;height:1.4px;background:linear-gradient(90deg,#4a5e88,#33507e 30%,#4c5f84 70%,#405578)"></div>
</body></html>
